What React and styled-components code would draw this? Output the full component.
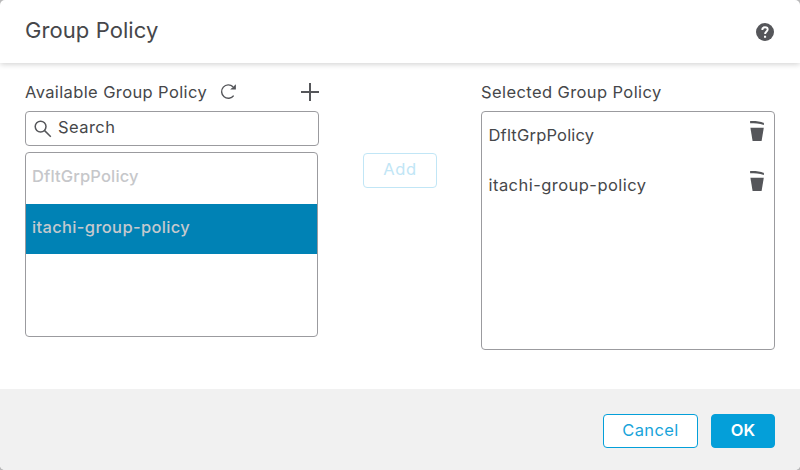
import React from "react";
import styled, { createGlobalStyle } from "styled-components";

const GlobalStyle = createGlobalStyle`
  *, *::before, *::after { box-sizing: border-box; }
  body { margin: 0; background: #b9b9ba; font-family: Inter, "Liberation Sans", sans-serif; color: #46474a; }
  button, input { font: inherit; }
`;

const Dialog = styled.div`
  width: 800px;
  height: 470px;
  display: flex;
  flex-direction: column;
  background: #fff;
  border-radius: 5px;
  overflow: hidden;
`;

const Header = styled.header`
  height: 63px;
  flex: none;
  display: flex;
  justify-content: space-between;
  padding: 0 26px 0 25px;
  box-shadow: 0 1px 6px rgba(0, 0, 0, 0.2);
`;

const Title = styled.h1`
  margin: 17px 0 0;
  font-size: 22px;
  line-height: 26px;
  font-weight: 400;
  letter-spacing: 0.08px;
`;

const HelpIcon = styled.svg`
  width: 18px;
  height: 18px;
  margin-top: 23px;
`;

const Body = styled.main`
  height: 326px;
  flex: none;
  display: grid;
  grid-template-columns: 294px 74px 294px;
  column-gap: 44px;
  padding: 19px 25px 0;
`;

const Column = styled.section`
  display: flex;
  flex-direction: column;
`;

const LabelRow = styled.div`
  height: 29px;
  flex: none;
  display: flex;
  align-items: flex-start;
`;

const Label = styled.span`
  font-size: 16.5px;
  line-height: 20px;
  letter-spacing: ${(p) => p.$tracking};
  white-space: nowrap;
`;

const RefreshIcon = styled.svg`
  width: 17px;
  height: 17px;
  margin: 1px 0 0 13px;
`;

const PlusIcon = styled.svg`
  width: 18px;
  height: 18px;
  margin: 1px 0 0 auto;
`;

const SearchBox = styled.div`
  height: 35px;
  flex: none;
  display: flex;
  align-items: flex-start;
  border: 1px solid #9b9b9f;
  border-radius: 4px;
  padding: 5px 8px 0;
  margin-bottom: 6px;
`;

const SearchIcon = styled.svg`
  width: 18px;
  height: 18px;
  margin: 3px 6px 0 0;
`;

const List = styled.ul`
  list-style: none;
  margin: 0;
  padding: 0;
  flex: none;
  width: ${(p) => p.$width};
  height: ${(p) => p.$height};
  border: 1px solid #9b9b9f;
  border-radius: 4px;
`;

const Option = styled.li`
  height: ${(p) => (p.$selected ? "50px" : "51px")};
  padding: 13px 6px 0;
  font-size: 16.5px;
  line-height: 20px;
  font-weight: 500;
  letter-spacing: ${(p) => p.$tracking};
  color: ${(p) => (p.$selected ? "#c5c9ce" : "#c6c7ca")};
  background: ${(p) => (p.$selected ? "#0082b5" : "transparent")};
`;

const Item = styled.li`
  height: 50px;
  display: flex;
  justify-content: space-between;
  align-items: flex-start;
  padding: 13px 9px 0 6.5px;
  font-size: 16.5px;
  line-height: 20px;
  letter-spacing: ${(p) => p.$tracking};
`;

const TrashIcon = styled.svg`
  width: 16px;
  height: 22px;
  margin-top: -5px;
`;

const Button = styled.button`
  width: ${(p) => p.$width};
  height: ${(p) => p.$height || "34px"};
  margin-top: ${(p) => p.$top || "0"};
  padding: 0 0 ${(p) => p.$lift || "2px"};
  border: 1px solid ${(p) => p.$line};
  border-radius: 4px;
  background: ${(p) => p.$fill || "#fff"};
  color: ${(p) => p.$ink};
  font-size: 16.5px;
  line-height: 20px;
  font-weight: ${(p) => p.$weight || 400};
  letter-spacing: ${(p) => p.$tracking || "0"};
`;

const Footer = styled.footer`
  flex: 1;
  display: flex;
  justify-content: flex-end;
  gap: 13px;
  padding: 25px 25px 0;
  background: #f1f1f1;
`;

const Trash = () => (
  <TrashIcon viewBox="0 0 16 22" fill="#55565a">
    <path d="M1.1 1C5 .7 11 1.1 14.9 2.9v2C10 3.5 6 3.2 1.1 3.2z" />
    <path d="M1.4 7.8h13.4l-2.2 13.2h-9z" />
  </TrashIcon>
);

export default function App() {
  return (
    <>
      <GlobalStyle />
      <Dialog role="dialog" aria-label="Group Policy">
        <Header>
          <Title>Group Policy</Title>
          <HelpIcon viewBox="0 0 18 18">
            <circle cx="9" cy="9" r="9" fill="#55565a" />
            <path d="M6.3 6.9C6.3 5 7.4 4.3 9 4.3s2.7.8 2.7 2.3c0 1.9-2.6 2-2.6 4.4" fill="none" stroke="#fff" strokeWidth="1.9" />
            <path d="M8 12.7h2.1v2.1H8z" fill="#fff" />
          </HelpIcon>
        </Header>
        <Body>
          <Column>
            <LabelRow>
              <Label $tracking="0.38px">Available Group Policy</Label>
              <RefreshIcon viewBox="0 0 17 17">
                <path d="M13.7 12.6A6.7 6.7 0 1 1 13 3.8" fill="none" stroke="#55565a" strokeWidth="1.4" />
                <path d="M15.9 1.2v5.2H10.2z" fill="#55565a" />
              </RefreshIcon>
              <PlusIcon viewBox="0 0 18 18">
                <path d="M9 0v18M0 9h18" stroke="#55565a" strokeWidth="2" />
              </PlusIcon>
            </LabelRow>
            <SearchBox>
              <SearchIcon viewBox="0 0 18 18" fill="none" stroke="#55565a" strokeWidth="1.5">
                <circle cx="6.6" cy="6.6" r="5.4" />
                <path d="M10.6 10.6l6.2 6.2" />
              </SearchIcon>
              <Label $tracking="0.45px">Search</Label>
            </SearchBox>
            <List $width="293px" $height="185px">
              <Option $tracking="0.15px">DfltGrpPolicy</Option>
              <Option $selected $tracking="0.34px">itachi-group-policy</Option>
            </List>
          </Column>
          <Button disabled $width="74px" $height="35px" $top="71px" $lift="4px" $line="#c1e6f6" $ink="#c1e6f6" $tracking="0.6px">Add</Button>
          <Column>
            <LabelRow>
              <Label $tracking="0.4px">Selected Group Policy</Label>
            </LabelRow>
            <List $width="294px" $height="239px">
              <Item $tracking="0.2px">DfltGrpPolicy<Trash /></Item>
              <Item $tracking="0.46px">itachi-group-policy<Trash /></Item>
            </List>
          </Column>
        </Body>
        <Footer>
          <Button $width="95px" $line="#049fd9" $ink="#18a4da" $tracking="0.4px">Cancel</Button>
          <Button $width="64px" $line="#049fd9" $fill="#049fd9" $ink="#fff" $weight={600}>OK</Button>
        </Footer>
      </Dialog>
    </>
  );
}
